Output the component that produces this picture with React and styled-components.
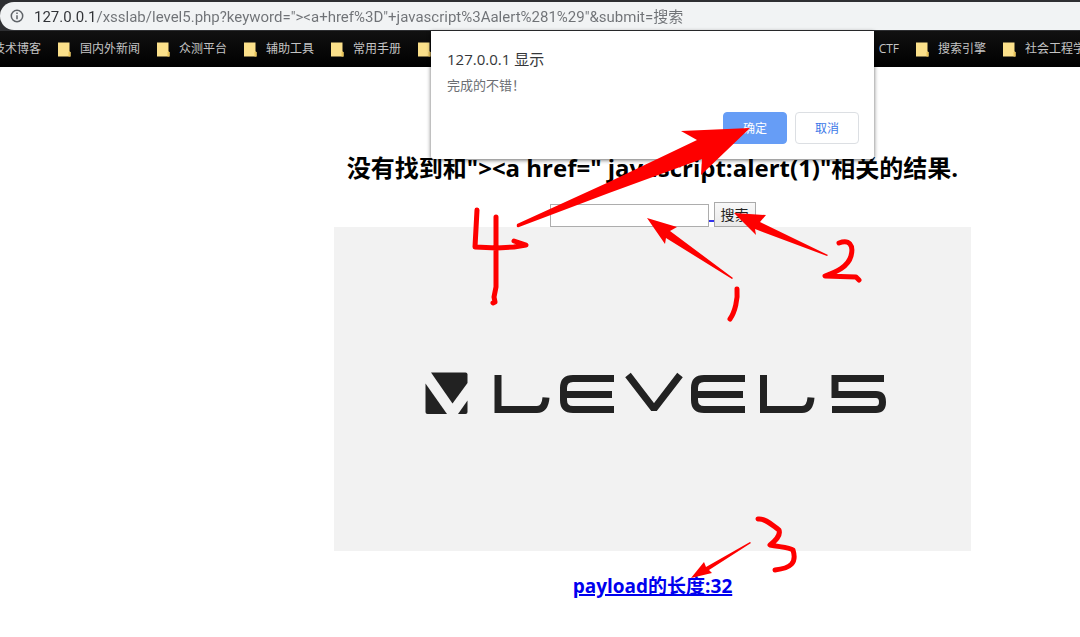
import React from "react";
import styled, { createGlobalStyle } from "styled-components";

const GlobalStyle = createGlobalStyle`
  * { box-sizing: border-box; }
  body {
    margin: 0;
    background: #fff;
    color: #000;
    font-family: "Open Sans", "Noto Sans CJK SC", sans-serif;
    overflow-x: hidden;
  }
`;

const Browser = styled.div`
  width: 100%;
  overflow: hidden;
`;

const AddressStrip = styled.header`
  padding: 2px 0 1px;
  background: #2e2f32;
`;

const AddressBar = styled.div`
  display: flex;
  align-items: center;
  gap: 10px;
  height: 28px;
  padding-left: 10px;
  border-radius: 14px 0 0 14px;
  background: #f1f3f4;
`;

/* The host part of the address is darker than the path after it. */
const AddressInput = styled.input`
  flex: 1;
  min-width: 0;
  height: 24px;
  padding: 0 0 2px;
  border: 0;
  outline: 0;
  background: linear-gradient(to right, #303236 60px, #6f7276 60px);
  background-clip: text;
  color: transparent;
  font-family: Roboto, "Noto Sans CJK SC", sans-serif;
  font-size: 15px;
`;

const Bookmarks = styled.nav`
  display: flex;
  align-items: center;
  gap: 17px;
  height: 36px;
  overflow: hidden;
  background: linear-gradient(#111, #000);
`;

const Bookmark = styled.a`
  display: flex;
  flex: none;
  align-items: center;
  gap: 9px;
  margin-left: ${(p) => (p.$cut ? "-7px" : "0")};
  color: #c4c4c4;
  font-size: 12px;
  line-height: 16px;
  text-decoration: none;
  white-space: nowrap;
`;

const CoveredBookmarks = styled.div`
  display: flex;
  flex: none;
  justify-content: space-between;
  align-items: center;
  width: 481px;
`;

const Page = styled.main`
  display: flex;
  justify-content: center;
  padding-left: 225px;
`;

const Column = styled.div`
  position: relative;
  display: flex;
  flex-direction: column;
  align-items: center;
  width: 637px;
  padding-top: 84px;
`;

const Title = styled.h2`
  margin: 0 0 18px;
  font-size: 24px;
  line-height: 33px;
  white-space: nowrap;
`;

const SearchForm = styled.form`
  display: flex;
  align-items: flex-end;
`;

const SearchInput = styled.input`
  width: 159px;
  height: 23px;
  padding: 1px 4px;
  border: 1px solid #adadad;
  background: #fff;
  font: inherit;
  font-size: 14px;
`;

const StrayLink = styled.a`
  width: 5px;
  height: 6px;
  margin-bottom: 1px;
  border-top: 2px solid #3333ee;
`;

const SearchButton = styled.button`
  width: 42px;
  height: 25px;
  padding: 0;
  border: 1px solid #aaa;
  background: linear-gradient(#f8f8f8, #e9e9e9);
  color: #222;
  font: inherit;
  font-size: 14px;
  line-height: 20px;
`;

const Picture = styled.div`
  width: 100%;
  background: #f2f2f2;
`;

const Drawing = styled.svg`
  display: block;
  width: 100%;
  height: auto;
`;

const Payload = styled.h3`
  margin: 22px 0 20px;
  font-size: 19px;
  line-height: 27px;
`;

const PayloadLink = styled.a`
  color: #0000ee;
  text-decoration-thickness: 2px;
`;

const Dialog = styled.section`
  position: absolute;
  top: -36px;
  left: 97px;
  width: 443px;
  padding: 16px 15px 15px 16px;
  border-radius: 0 0 3px 3px;
  background: #fff;
  box-shadow: 0 1px 4px rgba(0, 0, 0, 0.6);
`;

const DialogTitle = styled.h1`
  margin: 0;
  color: #35373a;
  font-size: 15px;
  font-weight: 400;
  line-height: 24px;
`;

const DialogText = styled.p`
  margin: 4px 0 17px;
  color: #6b6e72;
  font-size: 13px;
  line-height: 20px;
`;

const DialogActions = styled.div`
  display: flex;
  justify-content: flex-end;
  gap: 8px;
`;

const DialogButton = styled.button`
  width: 64px;
  height: 32px;
  padding: 0;
  border: 1px solid ${(p) => (p.$primary ? "#669df6" : "#dcdfe3")};
  border-radius: 4px;
  background: ${(p) => (p.$primary ? "#669df6" : "#fff")};
  color: ${(p) => (p.$primary ? "#fff" : "#3b78e7")};
  font: inherit;
  font-size: 12px;
`;

const Marks = styled.svg`
  position: absolute;
  top: -67px;
  left: 0;
  width: 637px;
  height: 637px;
  pointer-events: none;
`;

function InfoIcon() {
  return (
    <svg width="14" height="14" viewBox="0 0 14 14" fill="none" stroke="#5f6368" strokeWidth="1.5" aria-hidden="true">
      <circle cx="7" cy="7" r="5.7" />
      <path d="M7 6.2v4M7 3.6v1.5" />
    </svg>
  );
}

function FolderIcon() {
  return (
    <svg width="13" height="15" viewBox="0 0 13 15" aria-hidden="true">
      <path d="M0 0.5H11.5V9.5L12.5 10V14.5H0Z" fill="#fbe08a" />
      <path d="M10.5 14.5V10.5L11.5 9.5L12.5 10.5V14.5Z" fill="#e9c458" />
    </svg>
  );
}

function LevelLogo() {
  return (
    <Drawing viewBox="334 227 637 324" role="img" aria-label="LEVEL5">
      <g fill="#222">
        <path d="M431 372.500H465.500Q467.500 372.500 467.500 374.500V383L452.500 403.500Z" />
        <path d="M425.500 383.500L447 414H427.500Q425.500 414 425.500 412Z" />
        <path d="M467.500 400.500V412Q467.500 414 465.500 414H458Z" />
      </g>
      <g fill="none" stroke="#222" strokeWidth="7">
        <path d="M498 375V409.500H537C543 409.500 545.500 404 546 397.500" />
        <path d="M614 378.500H573Q563.500 378.500 563.500 388V400Q563.500 409.500 573 409.500H614M564 394.500H612" />
        <path d="M628 375L654 408.800L680 375" strokeLinejoin="bevel" />
        <path d="M745 378.500H704Q694.500 378.500 694.500 388V400Q694.500 409.500 704 409.500H745M695 394.500H743" />
        <path d="M763.500 375V409.500H802C808 409.500 810.500 404 811 397.500" />
        <path d="M884 378.500H835V394.500H876Q882.500 394.500 882.500 402Q882.500 409.500 876 409.500H832" />
      </g>
    </Drawing>
  );
}

function Annotations() {
  return (
    <Marks viewBox="334 0 637 637" aria-hidden="true">
      <g fill="#fe0000">
        <path d="M517 224L609 182L697 140L681 131L750 128L701 175L702 159L609 193L519 227Q516 228 517 224Z" />
        <path d="M647 218L677 227L670 231L733 278L732 279L666 238L665 244Z" />
        <path d="M734 213L766 215L760 222L828 255L827 256L755 229L756 235Z" />
        <path d="M750 542L751 543L709 570L712 573L691 578L704 562L706 567Z" />
      </g>
      <g fill="none" stroke="#fe0000" strokeWidth="5" strokeLinecap="round" strokeLinejoin="round">
        <path d="M477 210L475 247L497 248L514 247L526 245L514 241M496 217L496 287L494 297L495 302L493 303" />
        <path d="M737 289C738 299 735 312 730 319" />
        <path d="M839 243C849 239 854 245 851 256C848 267 836 272 825 276L856 277L859 280" />
        <path d="M758 519C765 518 772 525 779 530C781 536 775 541 770 545C779 547 789 547 793 550C797 563 791 568 775 570" />
      </g>
    </Marks>
  );
}

export default function App() {
  return (
    <>
      <GlobalStyle />
      <Browser>
        <AddressStrip>
          <AddressBar>
            <InfoIcon />
            <AddressInput
              type="text"
              aria-label="Address"
              defaultValue={'127.0.0.1/xsslab/level5.php?keyword="><a+href%3D"+javascript%3Aalert%281%29"&submit=搜索'}
            />
          </AddressBar>
        </AddressStrip>
        <Bookmarks>
          <Bookmark href="#" $cut>技术博客</Bookmark>
          <Bookmark href="#"><FolderIcon />国内外新闻</Bookmark>
          <Bookmark href="#"><FolderIcon />众测平台</Bookmark>
          <Bookmark href="#"><FolderIcon />辅助工具</Bookmark>
          <Bookmark href="#"><FolderIcon />常用手册</Bookmark>
          <CoveredBookmarks>
            <FolderIcon />
            <Bookmark href="#">CTF</Bookmark>
          </CoveredBookmarks>
          <Bookmark href="#"><FolderIcon />搜索引擎</Bookmark>
          <Bookmark href="#"><FolderIcon />社会工程学</Bookmark>
        </Bookmarks>
        <Page>
          <Column>
            <Title>{'没有找到和"><a href=" javascript:alert(1)"相关的结果.'}</Title>
            <SearchForm onSubmit={(e) => e.preventDefault()}>
              <SearchInput type="text" aria-label="keyword" />
              <StrayLink href="#" aria-label="javascript" />
              <SearchButton type="submit">搜索</SearchButton>
            </SearchForm>
            <Picture><LevelLogo /></Picture>
            <Payload><PayloadLink href="#">payload的长度:32</PayloadLink></Payload>
            <Dialog role="dialog" aria-labelledby="dialog-title">
              <DialogTitle id="dialog-title">127.0.0.1 显示</DialogTitle>
              <DialogText>完成的不错！</DialogText>
              <DialogActions>
                <DialogButton type="button" $primary>确定</DialogButton>
                <DialogButton type="button">取消</DialogButton>
              </DialogActions>
            </Dialog>
            <Annotations />
          </Column>
        </Page>
      </Browser>
    </>
  );
}
